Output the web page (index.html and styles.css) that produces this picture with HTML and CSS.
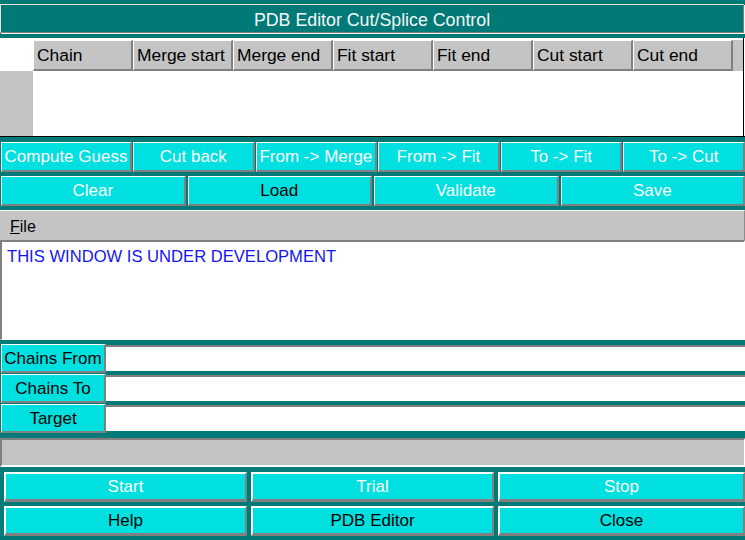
FILE: index.html
```html
<!DOCTYPE html>
<html>
<head>
<meta charset="utf-8">
<title>PDB Editor Cut/Splice Control</title>
<link rel="stylesheet" href="styles.css">
</head>
<body>
<div class="win">
  <div class="titlewrap"><div class="title">PDB Editor Cut/Splice Control</div></div>

  <div class="table">
    <div class="corner"></div>
    <div class="hdr">
      <div class="hdr-inner">
        <div class="hc">Chain</div>
        <div class="hc">Merge start</div>
        <div class="hc">Merge end</div>
        <div class="hc">Fit start</div>
        <div class="hc">Fit end</div>
        <div class="hc">Cut start</div>
        <div class="hc">Cut end</div>
      </div>
    </div>
    <div class="rowhdr"></div>
    <div class="tbody"></div>
  </div>

  <div class="btnrow r6">
    <div class="btn">Compute Guess</div>
    <div class="btn">Cut back</div>
    <div class="btn">From -&gt; Merge</div>
    <div class="btn">From -&gt; Fit</div>
    <div class="btn">To -&gt; Fit</div>
    <div class="btn">To -&gt; Cut</div>
  </div>

  <div class="btnrow r4">
    <div class="btn">Clear</div>
    <div class="btn dk">Load</div>
    <div class="btn">Validate</div>
    <div class="btn">Save</div>
  </div>

  <div class="menubar"><span class="menu"><u>F</u>ile</span></div>

  <div class="textarea">THIS WINDOW IS UNDER DEVELOPMENT</div>

  <div class="fields">
    <div class="field"><div class="btn dk lbl">Chains From</div><div class="entry"></div></div>
    <div class="field"><div class="btn dk lbl">Chains To</div><div class="entry"></div></div>
    <div class="field"><div class="btn dk lbl">Target</div><div class="entry"></div></div>
  </div>

  <div class="status"></div>

  <div class="bottom">
    <div class="btn big">Start</div>
    <div class="btn big">Trial</div>
    <div class="btn big">Stop</div>
    <div class="btn big dk">Help</div>
    <div class="btn big dk">PDB Editor</div>
    <div class="btn big dk">Close</div>
  </div>
</div>
</body>
</html>
```
FILE: styles.css
```css
html, body {
  margin: 0;
  padding: 0;
}
body {
  width: 745px;
  height: 540px;
  overflow: hidden;
  background: #017a77;
  font-family: "Liberation Sans", Arial, sans-serif;
}
.win {
  display: flex;
  flex-direction: column;
  width: 745px;
  height: 540px;
}

/* title */
.titlewrap {
  padding-top: 4px;
}
.title {
  box-sizing: border-box;
  width: 744px;
  height: 29px;
  border: 1px solid;
  border-color: #e4e4d4 #808080 #808080 #e4e4d4;
  box-shadow: 1px 1px 0 #f6f6e6;
  display: flex;
  align-items: center;
  justify-content: center;
  padding-top: 3px;
  color: #f4f8f8;
  font-size: 17.8px;
}

/* table */
.table {
  box-sizing: border-box;
  margin-top: 5px;
  width: 745px;
  height: 99px;
  padding-right: 1px;
  background: #fff;
  border-bottom: 1px solid #000;
  display: grid;
  grid-template-columns: 33px 1fr;
  grid-template-rows: 33px 1fr;
}
.corner {
  background: #fff;
}
.hdr {
  padding-top: 2px;
  border-right: 1px solid #000;
  background: #fff;
}
.hdr-inner {
  display: flex;
  height: 31px;
  background: #c4c4c4;
}
.hc {
  box-sizing: border-box;
  flex: 0 0 100px;
  width: 100px;
  height: 31px;
  border-style: solid;
  border-width: 1px 2px 2px 1px;
  border-color: #fff #808080 #808080 #fff;
  padding-left: 3px;
  line-height: 29px;
  font-size: 17.4px;
  color: #000;
  white-space: nowrap;
  overflow: hidden;
}
.rowhdr {
  background: #c4c4c4;
}
.tbody {
  background: #fff;
  border-right: 1px solid #000;
}

/* buttons */
.btnrow {
  display: grid;
  height: 30px;
  padding-left: 1px;
}
.r6 {
  margin-top: 5px;
  grid-template-columns: 131px repeat(5, 1fr);
  column-gap: 1px;
}
.r4 {
  margin-top: 4px;
  grid-template-columns: repeat(4, 1fr);
  column-gap: 2px;
}
.btn {
  box-sizing: border-box;
  background: #00e0e0;
  border-style: solid;
  border-width: 1px 2px 2px 1px;
  border-color: #fff #808080 #808080 #fff;
  display: flex;
  align-items: center;
  justify-content: center;
  padding-top: 1px;
  font-size: 17px;
  color: #fff;
  white-space: nowrap;
  overflow: hidden;
}
.btn.dk {
  color: #000;
}

/* menu */
.menubar {
  box-sizing: border-box;
  margin-top: 4px;
  height: 30px;
  background: #c4c4c4;
  border-top: 1px solid #fff;
  border-right: 1px solid #8c8c8c;
  display: flex;
  align-items: center;
  padding: 3px 0 0 10px;
}
.menu {
  font-size: 16px;
  color: #000;
}

/* text */
.textarea {
  box-sizing: border-box;
  height: 100px;
  background: #fff;
  border-style: solid;
  border-width: 2px 1px 1px 2px;
  border-color: #808080 #fff #fff #808080;
  padding: 5px 0 0 5px;
  color: #1414f0;
  font-size: 16.6px;
  line-height: 19px;
}

/* fields */
.fields {
  margin-top: 4px;
  display: flex;
  flex-direction: column;
  gap: 1px;
}
.field {
  display: flex;
  height: 29px;
  padding-left: 1px;
}
.lbl {
  flex: 0 0 105px;
  width: 105px;
  height: 29px;
}
.entry {
  box-sizing: border-box;
  flex: 1;
  margin-top: 1px;
  height: 26px;
  background: #fff;
  border-top: 2px solid #808080;
}

/* status */
.status {
  box-sizing: border-box;
  margin-top: 5px;
  height: 29px;
  background: #c4c4c4;
  border-style: solid;
  border-width: 2px 1px 2px 2px;
  border-color: #808080 #fff #fff #808080;
}

/* bottom */
.bottom {
  margin-top: 5px;
  display: grid;
  grid-template-columns: 243px 243px 1fr;
  grid-auto-rows: 30px;
  column-gap: 4px;
  row-gap: 4px;
  padding-left: 4px;
}
.btn.big {
  border-width: 2px 2px 3px 2px;
}
```
